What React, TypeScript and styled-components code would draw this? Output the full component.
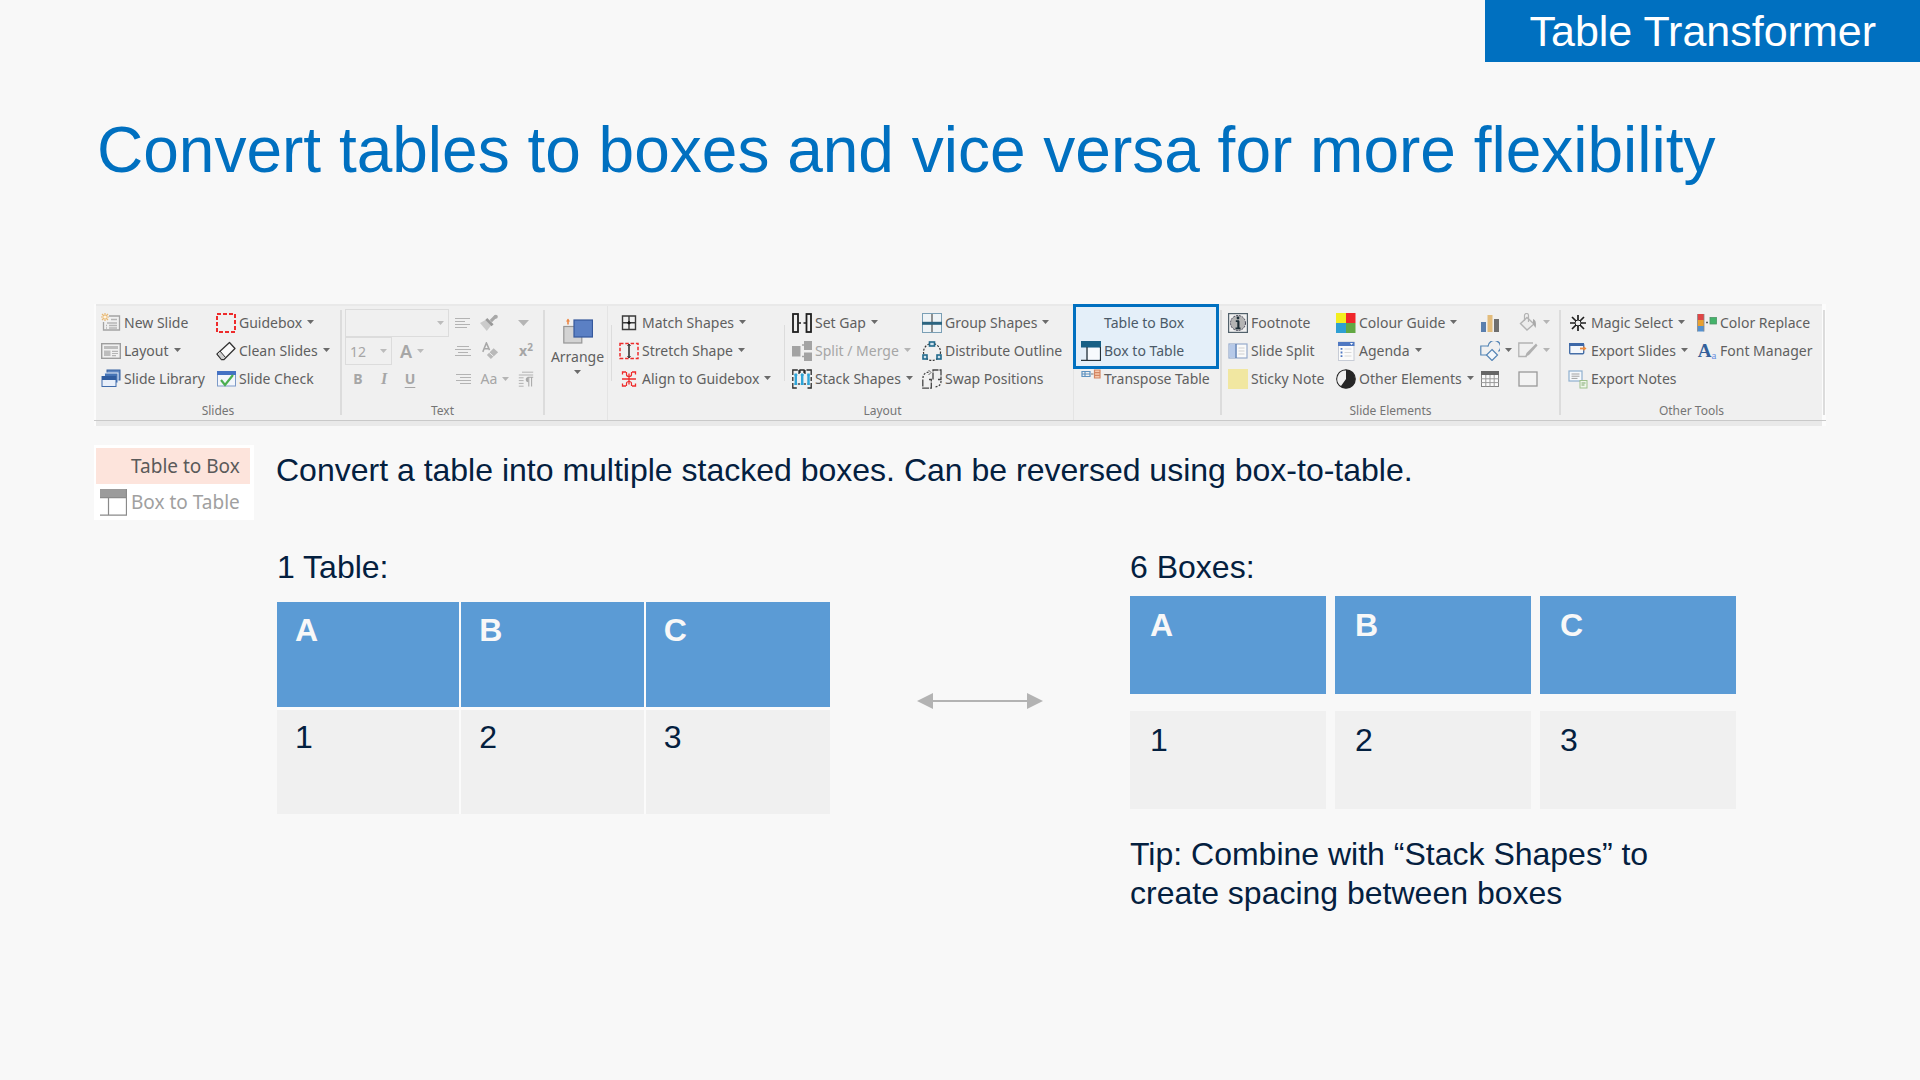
import React from "react";
import styled, { createGlobalStyle, css } from "styled-components";

const colors = {
  brand: "#0070c0",
  navy: "#04203f",
  page: "#f8f8f8",
  ribbon: "#f0f0f0",
  edge: "#e9e9e9",
  divider: "#dcdcdc",
  text: "#5f5f5f",
  muted: "#a6a6a6",
  cell: "#5b9bd5",
};

const GlobalStyle = createGlobalStyle`
  *, *::before, *::after { box-sizing: border-box; }
  body {
    margin: 0;
    background: ${colors.page};
    color: ${colors.navy};
    font-family: "Liberation Sans", Arial, sans-serif;
  }
  button, select { font: inherit; color: inherit; }
`;

/* ---------- page ---------- */

const Slide = styled.main`
  display: flex;
  flex-direction: column;
`;

const Badge = styled.div`
  align-self: flex-end;
  padding: 0 44px;
  background: ${colors.brand};
  color: #fff;
  font-size: 43px;
  line-height: 62px;
`;

const Title = styled.h1`
  margin: 50px 96px 0 97px;
  color: ${colors.brand};
  font-size: 64px;
  font-weight: 400;
  line-height: 76px;
`;

/* ---------- ribbon ---------- */

const Ribbon = styled.section`
  margin: 116px 94px 0;
  background: #fcfcfc;
  font-family: "Noto Sans", "Open Sans", sans-serif;
  font-size: 14px;
  color: ${colors.text};
`;

const Bar = styled.div`
  display: flex;
  margin-left: 2px;
`;

const Groups = styled.div`
  flex: 1;
  display: flex;
  background: ${colors.ribbon};
  border-top: 2px solid ${colors.edge};
  height: 116px;
`;

const Rule = styled.div`
  height: 1px;
  background: #c9c9c9;
`;

const Footer = styled.div`
  height: 5px;
  margin: 0 4px 0 2px;
  background: ${colors.edge};
`;

const Divider = styled.span<{ $kind?: "short" | "full" }>`
  flex: none;
  width: 2px;
  margin: 4px 0 5px;
  background: ${colors.divider};
  ${(p) => p.$kind === "short" && css`width: 1px; margin: 16px 0 12px;`}
  ${(p) => p.$kind === "full" && css`width: 1px; margin: -3px 0 -27px; background: #e4e4e4;`}
`;

const EndCap = styled.div`
  display: flex;
  width: 4px;
  padding: 2px 1px 0;
  background: #fcfcfc;
`;

const GroupBox = styled.div<{ $w: number }>`
  flex: ${(p) => p.$w} 1 0;
  min-width: 0;
  padding-top: 3px;
  display: flex;
  flex-direction: column;
`;

const GroupLabel = styled.div`
  margin-top: 7px;
  font-size: 12px;
  line-height: 22px;
  text-align: center;
  color: #757575;
`;

const Columns = styled.div<{ $pad?: number }>`
  display: flex;
  height: 84px;
  padding-left: ${(p) => p.$pad ?? 0}px;
`;

const Section = styled.div<{ $w: number; $pad?: number }>`
  flex: ${(p) => p.$w} 1 0;
  min-width: 0;
  display: flex;
  padding-left: ${(p) => p.$pad ?? 0}px;
  position: relative;
`;

const Column = styled.div<{ $w: number; $pad?: number }>`
  flex: ${(p) => p.$w} 1 0;
  min-width: 0;
  padding-left: ${(p) => p.$pad ?? 0}px;
  display: grid;
  grid-template-rows: repeat(3, 28px);
`;

const Command = styled.button<{ $tone?: "muted" | "accent" }>`
  display: flex;
  align-items: center;
  gap: 3px;
  padding: 0;
  border: 0;
  background: none;
  line-height: 28px;
  white-space: nowrap;
  position: relative;
  ${(p) => p.$tone === "muted" && css`color: ${colors.muted};`}
  ${(p) => p.$tone === "accent" && css`color: #4b5a68;`}
`;

const IconSlot = styled.span`
  flex: none;
  display: grid;
  place-items: center;
  width: 20px;
  height: 20px;
`;

const Highlight = styled.div`
  position: absolute;
  inset: -5px 1px auto -1px;
  height: 65px;
  background: #e4eff9;
  border: 3px solid ${colors.brand};
`;

const ArrangeButton = styled.button`
  flex: 1;
  display: flex;
  flex-direction: column;
  align-items: center;
  padding: 9px 0 0;
  border: 0;
  background: none;
  line-height: 26px;
`;

/* font tools */

const FontBlock = styled.div`
  flex: 110 1 0;
  padding-left: 3px;
  display: grid;
  grid-template-rows: repeat(3, 28px);
`;

const ToolRow = styled.div`
  display: flex;
  align-items: center;
  color: ${colors.muted};
`;

const SelectBox = styled.label<{ $w: number }>`
  display: flex;
  align-items: center;
  justify-content: flex-end;
  position: relative;
  width: ${(p) => p.$w}px;
  height: 28px;
  padding-right: 4px;
  border: 1px solid ${colors.divider};
  select {
    appearance: none;
    position: absolute;
    inset: 0;
    padding: 0 4px;
    border: 0;
    background: none;
    color: ${colors.muted};
  }
`;

const Glyph = styled.button<{ $w?: number; $kind?: "bold" | "italic" | "underline" | "big" }>`
  width: ${(p) => p.$w ?? 26}px;
  padding: 0;
  border: 0;
  background: none;
  display: flex;
  align-items: center;
  justify-content: center;
  gap: 5px;
  line-height: 28px;
  color: ${colors.muted};
  ${(p) => p.$kind === "bold" && css`font-weight: 700;`}
  ${(p) => p.$kind === "italic" && css`font-family: "Liberation Serif", serif; font-style: italic; font-weight: 700; font-size: 16px;`}
  ${(p) => p.$kind === "underline" && css`font-weight: 700; text-decoration: underline; text-underline-offset: 3px;`}
  ${(p) => p.$kind === "big" && css`font-weight: 600; font-size: 18px;`}
  sup { font-size: 10px; line-height: 10px; margin-bottom: 8px; margin-left: -5px; }
`;

const GlyphColumn = styled.div<{ $w: number }>`
  flex: ${(p) => p.$w} 1 0;
  display: grid;
  grid-template-rows: repeat(3, 28px);
  justify-items: start;
`;

/* ---------- explanation ---------- */

const Intro = styled.section`
  display: flex;
  align-items: flex-start;
  gap: 22px;
  margin: 19px 94px 0;
`;

const MenuCard = styled.div`
  flex: none;
  width: 160px;
  padding: 3px 4px 0 2px;
  background: #fff;
  font-family: "Noto Sans", "Open Sans", sans-serif;
`;

const MenuItem = styled.button<{ $active?: boolean }>`
  display: flex;
  align-items: center;
  gap: 4px;
  width: 100%;
  height: 36px;
  padding: 0 0 0 4px;
  border: 0;
  background: ${(p) => (p.$active ? "#fde4dc" : "none")};
  color: ${(p) => (p.$active ? "#5a5a5a" : "#a0a0a0")};
  font-size: 19px;
  white-space: nowrap;
`;

const MenuIcon = styled.span`
  flex: none;
  display: grid;
  width: 27px;
  height: 27px;
`;

const Text = styled.p`
  margin: 0;
  font-size: 32px;
  line-height: 39px;
`;

const IntroText = styled(Text)`
  padding-top: 6px;
`;

const Demo = styled.section`
  display: grid;
  grid-template-columns: 553fr 300fr 606fr;
  margin: 28px 184px 0 277px;
`;

const ArrowSlot = styled.div`
  display: flex;
  justify-content: center;
  padding-top: 145px;
`;

const Table = styled.table`
  width: 100%;
  margin-top: 15px;
  table-layout: fixed;
  border-spacing: 0;
  font-size: 32px;
  line-height: 39px;
  th, td {
    height: 104px;
    padding: 8px 18px;
    text-align: left;
    vertical-align: top;
    background: #f0f0f0;
    background-clip: padding-box;
  }
  th {
    height: 108px;
    padding-top: 9px;
    background-color: ${colors.cell};
    color: ${colors.page};
    border-bottom: 3px solid #fbfbfb;
  }
  th:not(:last-child), td:not(:last-child) { border-right: 2px solid #fbfbfb; }
`;

const Boxes = styled.div`
  display: grid;
  grid-template-columns: repeat(3, 1fr);
  gap: 17px 9px;
  margin: 9px 0 26px;
`;

const Box = styled.div<{ $head?: boolean }>`
  height: 98px;
  padding: 10px 20px;
  font-size: 32px;
  line-height: 39px;
  background: ${(p) => (p.$head ? colors.cell : "#f0f0f0")};
  ${(p) => p.$head && css`color: ${colors.page}; font-weight: 700;`}
`;

const Tip = styled(Text)`
  max-width: 560px;
`;

/* ---------- icons ---------- */

const Svg = ({ size = 20, children }: { size?: number; children: React.ReactNode }) => (
  <svg width={size} height={size} viewBox="0 0 20 20" fill="none" aria-hidden="true">{children}</svg>
);

const Caret = ({ color = "#6b6b6b", w = 7, h = 4 }: { color?: string; w?: number; h?: number }) => (
  <svg width={w} height={h} viewBox="0 0 7 4" preserveAspectRatio="none" aria-hidden="true"><path d="M0 0h7L3.500 4z" fill={color} /></svg>
);

const CaretSlot = styled.span`
  display: flex;
  margin: 0 0 2px 2px;
`;

const icons = {
  newSlide: (
    <Svg>
      <path d="M8 3h10.500v14h-16V9" stroke="#a3a3a3" strokeWidth="1.300" />
      <path d="M10 6.500h6M6 10h10M8 12.500h8M8 15h8M5 12.500h1M5 15h1" stroke="#b5b5b5" strokeWidth="1.300" />
      <path d="M4 0v8M0 4h8M1 1l6 6M7 1L1 7" stroke="#e9b872" strokeWidth="1.200" />
      <circle cx="4" cy="4" r="1.600" fill="#fff4e0" />
    </Svg>
  ),
  layout: (
    <Svg>
      <rect x=".7" y="2.700" width="18.600" height="14.600" stroke="#9d9d9d" strokeWidth="1.400" />
      <rect x="3" y="5" width="14" height="3" fill="#bdbdbd" />
      <rect x="3" y="9.500" width="6.500" height="5.500" fill="#bdbdbd" />
      <path d="M11 10.300h6M11 12.500h6M11 14.700h4" stroke="#b5b5b5" strokeWidth="1.200" />
    </Svg>
  ),
  library: (
    <Svg>
      <rect x="6" y="1" width="13" height="10" fill="#5e86c2" stroke="#35609f" />
      <rect x="3.500" y="4" width="13.500" height="10" fill="#4674b5" stroke="#e4ecf7" />
      <rect x="1" y="7.500" width="14" height="10" fill="#e8effa" stroke="#3f6bab" />
      <rect x="1" y="7" width="14" height="4" fill="#2f5c9f" />
    </Svg>
  ),
  guidebox: (
    <Svg>
      <rect x="1" y="1" width="18" height="18" stroke="#ee2b2b" strokeWidth="2" strokeDasharray="4 2" />
    </Svg>
  ),
  clean: (
    <Svg>
      <path d="M13.500 1.500L19 7.500 8 18.500H5.500L1 13z" fill="#fafafa" stroke="#333" strokeWidth="1.300" strokeLinejoin="round" />
      <path d="M1 13l3-3 5.500 6.500L8 18.500H5.500z" fill="#d0d0d0" stroke="#333" />
    </Svg>
  ),
  check: (
    <Svg>
      <rect x="1.500" y="2.500" width="18" height="14.500" fill="#f3f6fb" stroke="#7c9ac8" />
      <rect x="1" y="2" width="19" height="4" fill="#4472c4" />
      <path d="M5 11l4 5 8-10" stroke="#4caf50" strokeWidth="2.200" />
    </Svg>
  ),
  match: (
    <Svg>
      <path d="M3.500 3h13v13.500h-13zM10 3v13.500M3.500 9.800h13" stroke="#3a3a3a" strokeWidth="1.400" />
      <path d="M8.500 9.800h3M10 8.300v3" stroke="#111" strokeWidth="1.800" />
    </Svg>
  ),
  stretch: (
    <Svg>
      <rect x="1" y="2.500" width="18" height="15" stroke="#ee2b2b" strokeWidth="1.500" strokeDasharray="3.500 1.800" />
      <path d="M10 3.500v13" stroke="#333" strokeWidth="1.600" />
      <path d="M8.500 5L10 3l1.500 2M8.500 15l1.500 2 1.500-2" stroke="#333" />
    </Svg>
  ),
  align: (
    <Svg>
      <path d="M3.500 5.500V3H7M13 3h3.500v2.500M3.500 14.500V17H7M13 17h3.500v-2.500" stroke="#ee2b2b" strokeWidth="1.300" />
      <path d="M10 4.500v11M3 10h14" stroke="#ee2b2b" strokeWidth="1.300" />
      <path d="M7.500 3v2.500Q7.500 7.500 10 7.500T12.500 5.500V3M7.500 17v-2.500Q7.500 12.500 10 12.500T12.500 14.500V17" stroke="#ee2b2b" strokeWidth="1.200" />
    </Svg>
  ),
  gap: (
    <Svg>
      <rect x="1" y="1" width="5" height="18" stroke="#1f1f1f" strokeWidth="1.800" />
      <rect x="14.500" y="1" width="4.500" height="18" stroke="#1f1f1f" strokeWidth="1.800" />
      <path d="M6.500 10h2.500M11.500 10h2.500" stroke="#1f1f1f" strokeWidth="1.600" />
    </Svg>
  ),
  split: (
    <Svg>
      <rect x="0" y="5" width="8.500" height="10.500" fill="#a3a3a3" />
      <rect x="12" y="0" width="8" height="9" fill="#a3a3a3" />
      <rect x="12" y="11.500" width="8" height="8.500" fill="#a3a3a3" />
      <path d="M10 4h2M10 15.500h2" stroke="#a3a3a3" strokeWidth="1.300" />
    </Svg>
  ),
  stack: (
    <Svg>
      <path d="M.8 6V1h5M8 4V1h4v3M14.500 1h4.700v5M.8 14v5h4M15.500 19h3.700v-5M.8 8v4M19.200 8v4M7 1v4M13 1v4M7 14v2M13 14v2" stroke="#2b2b2b" strokeWidth="1.300" />
      <path d="M3.800 4.500v11.500M10.200 4.500v11.500M16.500 4.500v11.500" stroke="#2fa4d8" strokeWidth="2.400" />
      <path d="M2 6h3.500M8.500 6h3.500M15 6h3M2 15h3.500M8.500 15h3.500M15 15h3" stroke="#2fa4d8" />
    </Svg>
  ),
  group: (
    <Svg>
      <rect x=".5" y=".5" width="19" height="19" fill="#eef3f6" stroke="#7a9fb5" />
      <path d="M10 1v18" stroke="#666" strokeWidth="1.400" />
      <path d="M0 10.300h20" stroke="#2b6480" strokeWidth="3" />
    </Svg>
  ),
  outline: (
    <Svg>
      <circle cx="10" cy="11" r="8.500" stroke="#333" strokeWidth="1.200" strokeDasharray="2 1.500" />
      <rect x="7.500" y="1" width="5" height="4" fill="#cfe3ee" stroke="#226a8c" strokeWidth="1.600" />
      <rect x="1" y="14" width="4" height="4" fill="#cfe3ee" stroke="#226a8c" strokeWidth="1.600" />
      <rect x="15" y="14" width="4" height="4" fill="#cfe3ee" stroke="#226a8c" strokeWidth="1.600" />
    </Svg>
  ),
  swap: (
    <Svg>
      <path d="M11 10.500V1h8v9.500h-3M.8 10.500v8.700h8.500v-8.700H7" stroke="#444" strokeWidth="1.300" strokeDasharray="7 1" />
      <path d="M1 9c0-4 3-6 6.500-6M19 12c0 4-2.500 6-7 6" stroke="#444" strokeWidth="1.300" strokeDasharray="2 1.500" />
      <path d="M6.500 1L9 3.500 6.500 6" stroke="#666" />
    </Svg>
  ),
  boxToTable: (
    <Svg>
      <rect x="0" y="0" width="20" height="6.500" fill="#175f85" />
      <path d="M6 6v13.500M19.400 6v13.400M0 19.300h20" stroke="#26323a" strokeWidth="1.300" />
      <rect x="7" y="7" width="11.600" height="11.500" fill="#f7fafd" />
    </Svg>
  ),
  transpose: (
    <Svg>
      <path d="M1 2.500h8v5H1zM4 2.500v5M1 5h8" stroke="#5e92c0" strokeWidth="1.200" />
      <path d="M10 5h2.500" stroke="#777" />
      <path d="M13.500 1h5.500v8h-5.500zM13.500 3.700h5.500M13.500 6.300h5.500" fill="#f7c9ad" stroke="#d48662" strokeWidth="1.200" />
    </Svg>
  ),
  footnote: (
    <Svg>
      <rect x=".6" y=".6" width="18.800" height="18.800" stroke="#52616b" strokeWidth="1.200" />
      <circle cx="10" cy="10" r="7.500" fill="#b4b4b4" stroke="#445" strokeDasharray="2 1" />
      <path d="M7.800 8.200h2.400v7M7.500 15.300h5" stroke="#1e2f38" strokeWidth="1.800" />
      <path d="M10.800 8v7" stroke="#1e2f38" strokeWidth="1.200" />
      <circle cx="10" cy="5" r="1.400" fill="#1e2f38" />
    </Svg>
  ),
  slideSplit: (
    <Svg>
      <rect x="1" y="3" width="18" height="14" fill="#fafafa" stroke="#97abcc" strokeWidth="1.200" />
      <rect x="1.500" y="3.500" width="6" height="13" fill="#b6c9e8" />
      <path d="M8 3v14" stroke="#5f80b5" strokeWidth="1.500" />
      <path d="M10.500 7h6M10.500 10h6M10.500 13h6" stroke="#d0d0d0" />
    </Svg>
  ),
  sticky: <Svg><rect width="20" height="20" fill="#f1e7a1" /></Svg>,
  colour: (
    <Svg>
      <rect width="10" height="10" fill="#f3ee1e" />
      <rect x="10" width="9.500" height="10" fill="#f0262b" />
      <rect y="10" width="10" height="10" fill="#2e9fd3" />
      <rect x="10" y="10" width="9.500" height="10" fill="#62a843" />
    </Svg>
  ),
  agenda: (
    <Svg>
      <rect x="2.500" y="1" width="15.500" height="18.500" fill="#fbfbfb" stroke="#c7ccd6" />
      <rect x="2" y="1" width="16.500" height="4" fill="#4f78c2" />
      <path d="M14 2l1.500 2L17 2z" fill="#fff" />
      <path d="M5.500 7v10.500" stroke="#4f78c2" strokeWidth="1.800" strokeDasharray="1.800 1.800" />
      <path d="M8.500 8h7M8.500 11.500h7M8.500 15h7" stroke="#d8d8d8" />
    </Svg>
  ),
  other: (
    <Svg>
      <circle cx="10" cy="10" r="9.200" fill="#262626" stroke="#262626" strokeWidth="1.300" />
      <path d="M10 10V1.500A8.500 8.500 0 0 0 5 17z" fill="#f0f0f0" />
    </Svg>
  ),
  chart: (
    <Svg>
      <rect x="1" y="9" width="5" height="10" fill="#5a7fae" />
      <rect x="7.500" y="2" width="5" height="17" fill="#e3bc7b" />
      <rect x="14" y="6" width="5" height="13" fill="#6f6f6f" />
    </Svg>
  ),
  shapes: (
    <Svg>
      <path d="M8 14H.8V5h7.500" stroke="#5585b5" strokeWidth="1.200" />
      <path d="M8 5.500A6.300 6.300 0 1 1 18.500 10.500" stroke="#5585b5" strokeWidth="1.200" />
      <path d="M12 8.500l5.500 5.500-5.500 5.500L6.500 14z" fill="#f3f7fb" stroke="#5585b5" strokeWidth="1.200" />
    </Svg>
  ),
  table: (
    <Svg>
      <rect x="1.500" y="3" width="17" height="14.500" fill="#fafafa" stroke="#848484" />
      <rect x="1" y="2" width="18" height="4" fill="#666" />
      <path d="M5.800 6v11.500M10 6v11.500M14.200 6v11.500M1 9.800h18M1 13.600h18" stroke="#9a9a9a" />
    </Svg>
  ),
  fill: (
    <Svg>
      <path d="M9 4.500l7 6.500-7 6L2.500 10.500z" fill="#ececec" stroke="#b3b3b3" strokeWidth="1.400" />
      <path d="M6.500 8V2.500a2 2 0 0 1 4 0V9" stroke="#b3b3b3" strokeWidth="1.200" />
      <path d="M15 6c3 1 3.500 5 2.500 9l-2.500-4z" fill="#a9a9a9" />
    </Svg>
  ),
  pen: (
    <Svg>
      <path d="M15 2H.8v13.500h8" stroke="#b3b3b3" strokeWidth="1.300" />
      <path d="M18 2.500L8.500 12l-1.500 4 4-2 8.500-9.500z" fill="#b0b0b0" />
    </Svg>
  ),
  frame: <Svg><rect x="1" y="3" width="18" height="14" fill="#f3f3f3" stroke="#999" strokeWidth="1.300" /></Svg>,
  magic: (
    <Svg>
      <path d="M10 2v5M10 12.500v5.500M2 10h5M13 10h5M4 4l4 4M12 12l4 4M16 4l-4 4M8 12l-4 4" stroke="#1f1f1f" strokeWidth="1.700" />
      <circle cx="10" cy="10" r="3" stroke="#1f1f1f" />
    </Svg>
  ),
  exportSlides: (
    <Svg>
      <rect x="1.700" y="2.700" width="14" height="10" rx="1" fill="#f4f7fb" stroke="#466fa8" strokeWidth="1.400" />
      <rect x="1" y="2" width="15" height="3" fill="#3d68a8" />
      <path d="M12 7.500h5" stroke="#ef8a3c" strokeWidth="1.800" />
      <path d="M15.500 5L18.500 7.500l-3 2.500z" fill="#ef8a3c" />
    </Svg>
  ),
  exportNotes: (
    <Svg>
      <rect x="1" y="2" width="13" height="10" fill="#f6f9fc" stroke="#8fb0cf" strokeWidth="1.200" />
      <path d="M3.500 5h8M3.500 7.200h8M3.500 9.400h6" stroke="#a0a0a0" />
      <rect x="12" y="11.500" width="7" height="7.500" fill="#eef6ea" stroke="#9dc08b" />
      <path d="M13.500 14h4M13.500 16h3" stroke="#7fa76c" />
    </Svg>
  ),
  replace: (
    <Svg>
      <rect x=".5" y="1" width="6.500" height="6" fill="#e04646" />
      <rect x=".5" y="7" width="6.500" height="6" fill="#e9a030" />
      <rect x=".5" y="13" width="6.500" height="5.500" fill="#5591cf" />
      <path d="M.5 1v17.500M7 1v17.500" stroke="#888" strokeWidth=".8" />
      <path d="M9 9.500h2" stroke="#555" strokeWidth="1.500" />
      <rect x="13" y="4.500" width="6.500" height="6.500" fill="#43b36a" stroke="#4e9466" strokeWidth=".8" />
    </Svg>
  ),
};

const TableGlyph = () => (
  <Svg size={27}>
    <rect width="20" height="6.500" fill="#9b9b9b" />
    <path d="M6.300 6v13.400M19.600 0v19.400M0 19.400h20M0 6.400h20" stroke="#8a8a8a" strokeWidth=".9" />
  </Svg>
);

const ArrangeIcon = () => (
  <svg width="30" height="26" viewBox="0 0 30 26" fill="none" aria-hidden="true">
    <rect x=".8" y="8.500" width="18" height="16.500" fill="#d3d3d3" stroke="#969696" strokeWidth="1.200" />
    <rect x="11" y="2" width="18.500" height="17" fill="#5b80c4" stroke="#35589c" strokeWidth="1.200" />
    <path d="M5 1.500v5" stroke="#ed8745" strokeWidth="1.600" />
    <path d="M3 3.500L5 .5l2 3z" fill="#ed8745" />
  </svg>
);

const Lines = ({ kind }: { kind: "left" | "center" | "right" }) => {
  const d = {
    left: "M0 1.500h15M0 4.500h10M0 7.500h15M0 10.500h12",
    center: "M2 1.500h12M0 4.500h16M3 7.500h10M0 10.500h16",
    right: "M1 1.500h15M5 4.500h11M1 7.500h15M5 10.500h11",
  }[kind];
  return (
    <svg width="16" height="12" viewBox="0 0 16 12" aria-hidden="true"><path d={d} stroke="#b3b3b3" /></svg>
  );
};

const Painter = () => (
  <Svg size={18}>
    <path d="M0 10l6.500-3.500 6 6-5 6.500z" fill="#cbcbcb" />
    <path d="M7 5.500l7 7" stroke="#999" strokeWidth="3" />
    <path d="M12 8l5-5" stroke="#a8a8a8" strokeWidth="3.500" />
    <circle cx="17.500" cy="3" r="2.300" fill="#a8a8a8" />
  </Svg>
);

const ClearFormat = () => (
  <Svg size={18}>
    <path d="M2 11L6 1l3.500 8M3.500 7.500h5" stroke="#a8a8a8" strokeWidth="1.700" />
    <path d="M14 7l5 4.500-8 7.500-4.500-4.500z" fill="#b9b9b9" />
    <path d="M9 11.500l5 4.500" stroke="#f0f0f0" />
  </Svg>
);

const Paragraph = () => (
  <Svg size={18}>
    <path d="M5 1.500h14M1 5h18M1 8.500h6M1 12h6M1 15.500h6M1 19h6" stroke="#b0b0b0" strokeWidth="1.200" />
    <path d="M13.500 8v11.500M17 8v11.500M12 7.700h7" stroke="#a8a8a8" strokeWidth="1.300" />
    <path d="M13 7.500a3.200 3.200 0 0 0 0 6.500z" fill="#a8a8a8" />
  </Svg>
);

/* ---------- composed parts ---------- */

type ItemProps = {
  icon?: React.ReactNode;
  label?: string;
  title?: string;
  menu?: boolean;
  tone?: "muted" | "accent";
};

const Item = ({ icon, label, title, menu, tone }: ItemProps) => (
  <Command type="button" $tone={tone} aria-label={label ? undefined : title}>
    <IconSlot>{icon}</IconSlot>
    {label}
    {menu && <CaretSlot><Caret color={tone === "muted" ? "#b5b5b5" : undefined} /></CaretSlot>}
  </Command>
);

const FontManagerIcon = styled.span`
  display: flex;
  align-items: flex-end;
  color: #33609a;
  font: 700 19px/20px "Liberation Serif", serif;
  small { font-size: 11px; line-height: 12px; font-weight: 400; color: #6a8fe0; }
`;

const RibbonBar = () => (
  <Ribbon aria-label="Ribbon">
    <Bar>
      <Groups>
        <GroupBox $w={244}>
          <Columns $pad={5}>
            <Column $w={115}>
              <Item icon={icons.newSlide} label="New Slide" />
              <Item icon={icons.layout} label="Layout" menu />
              <Item icon={icons.library} label="Slide Library" />
            </Column>
            <Column $w={124}>
              <Item icon={icons.guidebox} label="Guidebox" menu />
              <Item icon={icons.clean} label="Clean Slides" menu />
              <Item icon={icons.check} label="Slide Check" />
            </Column>
          </Columns>
          <GroupLabel>Slides</GroupLabel>
        </GroupBox>
        <Divider />
        <GroupBox $w={201}>
          <Columns>
            <FontBlock>
              <SelectBox $w={104}>
                <select aria-label="Font" defaultValue=""><option value="" /></select>
                <Caret color="#bcbcbc" />
              </SelectBox>
              <ToolRow>
                <SelectBox $w={47}>
                  <select aria-label="Font size" defaultValue="12"><option>12</option></select>
                  <Caret color="#bcbcbc" />
                </SelectBox>
                <Glyph type="button" $w={40} $kind="big" aria-label="Font colour">A<Caret color="#bcbcbc" /></Glyph>
              </ToolRow>
              <ToolRow>
                <Glyph type="button" $kind="bold">B</Glyph>
                <Glyph type="button" $kind="italic">I</Glyph>
                <Glyph type="button" $kind="underline">U</Glyph>
              </ToolRow>
            </FontBlock>
            <GlyphColumn $w={25}>
              <Glyph type="button" $w={16} aria-label="Align left"><Lines kind="left" /></Glyph>
              <Glyph type="button" $w={16} aria-label="Centre"><Lines kind="center" /></Glyph>
              <Glyph type="button" $w={16} aria-label="Align right"><Lines kind="right" /></Glyph>
            </GlyphColumn>
            <GlyphColumn $w={38}>
              <Glyph type="button" $w={18} aria-label="Format painter"><Painter /></Glyph>
              <Glyph type="button" $w={20} aria-label="Clear formatting"><ClearFormat /></Glyph>
              <Glyph type="button" $w={30}>Aa<Caret color="#b5b5b5" /></Glyph>
            </GlyphColumn>
            <GlyphColumn $w={25}>
              <Glyph type="button" $w={11} aria-label="More"><Caret color="#b5b5b5" w={11} h={6} /></Glyph>
              <Glyph type="button" $w={16} $kind="bold">x<sup>2</sup></Glyph>
              <Glyph type="button" $w={16} aria-label="Paragraph"><Paragraph /></Glyph>
            </GlyphColumn>
          </Columns>
          <GroupLabel>Text</GroupLabel>
        </GroupBox>
        <Divider />
        <GroupBox $w={675}>
          <Columns>
            <Section $w={59} $pad={3}>
              <ArrangeButton type="button"><ArrangeIcon />Arrange<Caret /></ArrangeButton>
            </Section>
            <Divider $kind="full" />
            <Section $w={462} $pad={3}>
              <Divider $kind="short" />
              <Column $w={165} $pad={7}>
                <Item icon={icons.match} label="Match Shapes" menu />
                <Item icon={icons.stretch} label="Stretch Shape" menu />
                <Item icon={icons.align} label="Align to Guidebox" menu />
              </Column>
              <Divider $kind="short" />
              <Column $w={130} $pad={7}>
                <Item icon={icons.gap} label="Set Gap" menu />
                <Item icon={icons.split} label="Split / Merge" menu tone="muted" />
                <Item icon={icons.stack} label="Stack Shapes" menu />
              </Column>
              <Column $w={151}>
                <Item icon={icons.group} label="Group Shapes" menu />
                <Item icon={icons.outline} label="Distribute Outline" />
                <Item icon={icons.swap} label="Swap Positions" />
              </Column>
            </Section>
            <Divider $kind="full" />
            <Section $w={139} $pad={7}>
              <Highlight />
              <Column $w={139}>
                <Item label="Table to Box" tone="accent" />
                <Item icon={icons.boxToTable} label="Box to Table" tone="accent" />
                <Item icon={icons.transpose} label="Transpose Table" />
              </Column>
            </Section>
          </Columns>
          <GroupLabel>Layout</GroupLabel>
        </GroupBox>
        <Divider />
        <GroupBox $w={337}>
          <Columns $pad={6}>
            <Column $w={108}>
              <Item icon={icons.footnote} label="Footnote" />
              <Item icon={icons.slideSplit} label="Slide Split" />
              <Item icon={icons.sticky} label="Sticky Note" />
            </Column>
            <Column $w={144}>
              <Item icon={icons.colour} label="Colour Guide" menu />
              <Item icon={icons.agenda} label="Agenda" menu />
              <Item icon={icons.other} label="Other Elements" menu />
            </Column>
            <Column $w={38}>
              <Item icon={icons.chart} title="Chart" />
              <Item icon={icons.shapes} title="Shapes" menu />
              <Item icon={icons.table} title="Table" />
            </Column>
            <Column $w={41}>
              <Item icon={icons.fill} title="Fill" menu tone="muted" />
              <Item icon={icons.pen} title="Outline" menu tone="muted" />
              <Item icon={icons.frame} title="Text box" />
            </Column>
          </Columns>
          <GroupLabel>Slide Elements</GroupLabel>
        </GroupBox>
        <Divider />
        <GroupBox $w={261}>
          <Columns $pad={7}>
            <Column $w={129}>
              <Item icon={icons.magic} label="Magic Select" menu />
              <Item icon={icons.exportSlides} label="Export Slides" menu />
              <Item icon={icons.exportNotes} label="Export Notes" />
            </Column>
            <Column $w={125}>
              <Item icon={icons.replace} label="Color Replace" />
              <Item icon={<FontManagerIcon aria-hidden="true">A<small>a</small></FontManagerIcon>} label="Font Manager" />
            </Column>
          </Columns>
          <GroupLabel>Other Tools</GroupLabel>
        </GroupBox>
      </Groups>
      <EndCap><Divider /></EndCap>
    </Bar>
    <Rule />
    <Footer />
  </Ribbon>
);

const ConvertArrow = () => (
  <svg width="126" height="16" viewBox="0 0 126 16" fill="#b3b3b3" role="img" aria-label="Converts both ways">
    <path d="M0 8L16 0v16zM126 8L110 0v16z" />
    <rect x="14" y="7" width="98" height="2" />
  </svg>
);

const heads = ["A", "B", "C"];
const values = ["1", "2", "3"];

export default function App() {
  return (
    <>
      <GlobalStyle />
      <Slide>
        <Badge>Table Transformer</Badge>
        <Title>Convert tables to boxes and vice versa for more flexibility</Title>
        <RibbonBar />
        <Intro>
          <MenuCard>
            <MenuItem type="button" $active><MenuIcon />Table to Box</MenuItem>
            <MenuItem type="button"><MenuIcon><TableGlyph /></MenuIcon>Box to Table</MenuItem>
          </MenuCard>
          <IntroText>Convert a table into multiple stacked boxes. Can be reversed using box-to-table.</IntroText>
        </Intro>
        <Demo>
          <div>
            <Text id="table-caption">1 Table:</Text>
            <Table aria-labelledby="table-caption">
              <thead><tr>{heads.map((h) => <th key={h} scope="col">{h}</th>)}</tr></thead>
              <tbody><tr>{values.map((v) => <td key={v}>{v}</td>)}</tr></tbody>
            </Table>
          </div>
          <ArrowSlot><ConvertArrow /></ArrowSlot>
          <div>
            <Text>6 Boxes:</Text>
            <Boxes>
              {heads.map((h) => <Box key={h} $head>{h}</Box>)}
              {values.map((v) => <Box key={v}>{v}</Box>)}
            </Boxes>
            <Tip>Tip: Combine with “Stack Shapes” to create spacing between boxes</Tip>
          </div>
        </Demo>
      </Slide>
    </>
  );
}
